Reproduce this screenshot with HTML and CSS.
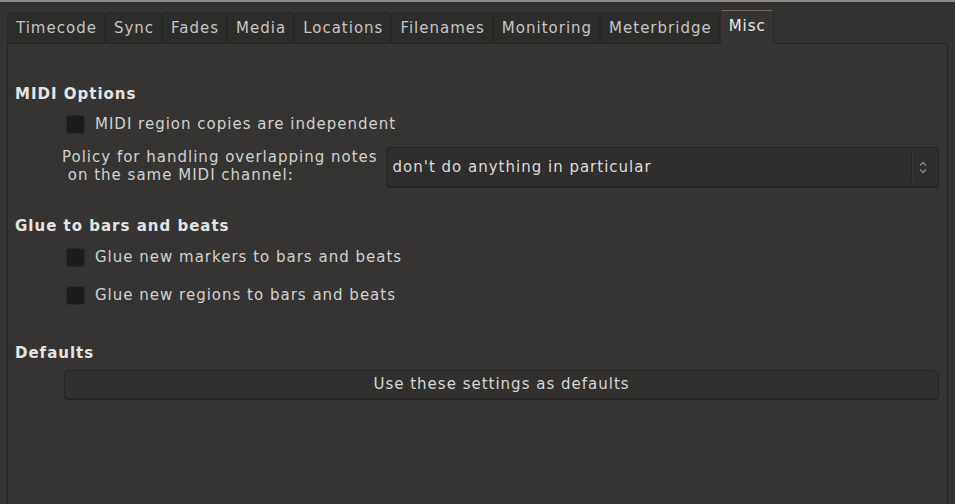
FILE: index.html
```html
<!DOCTYPE html>
<html>
<head>
<meta charset="utf-8">
<link rel="stylesheet" href="styles.css">
</head>
<body>
<div class="topline"></div>
<div class="tabs">
  <div class="tab">Timecode</div>
  <div class="tab">Sync</div>
  <div class="tab">Fades</div>
  <div class="tab">Media</div>
  <div class="tab">Locations</div>
  <div class="tab">Filenames</div>
  <div class="tab">Monitoring</div>
  <div class="tab">Meterbridge</div>
  <div class="tab active">Misc</div>
</div>
<div class="panel">
  <div class="heading h-midi">MIDI Options</div>
  <div class="check-row r1"><span class="box"></span><span class="label">MIDI region copies are independent</span></div>
  <div class="policy-row">
    <div class="policy-label">Policy for handling overlapping notes
 on the same MIDI channel:</div>
    <div class="combo">
      <span class="combo-text">don't do anything in particular</span>
      <span class="combo-sep"></span>
      <svg class="combo-arrow" width="8" height="13" viewBox="0 0 8 13"><path d="M1 4.5 L4 1.5 L7 4.5" fill="none" stroke="#8a8a89" stroke-width="1.3"/><path d="M1 8.5 L4 11.5 L7 8.5" fill="none" stroke="#8a8a89" stroke-width="1.3"/></svg>
    </div>
  </div>
  <div class="heading h-glue">Glue to bars and beats</div>
  <div class="check-row r2"><span class="box"></span><span class="label">Glue new markers to bars and beats</span></div>
  <div class="check-row r3"><span class="box"></span><span class="label">Glue new regions to bars and beats</span></div>
  <div class="heading h-def">Defaults</div>
  <div class="button">Use these settings as defaults</div>
</div>
</body>
</html>
```
FILE: styles.css
```css
html, body {
  margin: 0;
  padding: 0;
  height: 100%;
  overflow: hidden;
}
body {
  background: #333230;
  font-family: "DejaVu Sans", sans-serif;
  font-size: 15px;
  letter-spacing: 1px;
  color: #d2d2d0;
  display: flex;
  flex-direction: column;
}
.topline {
  height: 2px;
  background: #8d8d8c;
  flex: none;
}
.tabs {
  display: flex;
  align-items: flex-end;
  padding-left: 7px;
  margin-top: 8px;
  position: relative;
  z-index: 2;
  flex: none;
}
.tab {
  height: 30px;
  line-height: 30px;
  padding: 0 7px 0 8px;
  border: 1px solid #262625;
  border-bottom: none;
  border-radius: 4px 4px 0 0;
  background: #2c2c2b;
  color: #c6c6c4;
}
.tab.active {
  height: 33px;
  line-height: 30px;
  margin-bottom: -1px;
  background: #353432;
  border-color: #2a2928;
  border-top: 1px solid #6d675d;
  color: #ebebea;
}
.panel {
  flex: 1;
  min-height: 0;
  margin: 0 7px;
  border: 1px solid #252524;
  border-bottom: none;
  border-radius: 0 4px 0 0;
  background: #353432;
  padding: 40px 8px 0 7px;
  display: flex;
  flex-direction: column;
}
.heading {
  font-weight: bold;
  line-height: 20px;
  color: #e4e4e2;
}
.h-glue { margin-top: 29px; }
.h-def { margin-top: 38px; }
.check-row {
  display: flex;
  align-items: center;
  height: 20px;
  line-height: 20px;
  padding-left: 51px;
}
.r1 { margin-top: 10px; }
.r2 { margin-top: 11px; }
.r3 { margin-top: 18px; }
.box {
  width: 17px;
  height: 17px;
  background: #1c1c1c;
  border: 1px solid #2a2a29;
  border-radius: 3px;
  margin-right: 10px;
  flex: none;
}
.policy-row {
  display: flex;
  align-items: flex-start;
  margin-top: 13px;
  padding-left: 47px;
}
.policy-label {
  white-space: pre;
  line-height: 18px;
  margin-top: 1px;
  margin-right: 8px;
}
.combo {
  flex: 1;
  height: 38px;
  border: 1px solid #232322;
  border-radius: 4px;
  background: #2f2e2d;
  box-shadow: 0 1px 0 #252524;
  display: flex;
  align-items: center;
  padding-left: 6px;
}
.combo-text {
  flex: 1;
  color: #dcdcda;
}
.combo-sep {
  width: 1px;
  height: 30px;
  background: #242423;
  box-shadow: 1px 0 0 #393837;
  margin-right: 7px;
}
.combo-arrow {
  margin-right: 11px;
}
.button {
  margin-top: 7px;
  margin-left: 49px;
  height: 27px;
  line-height: 27px;
  border: 1px solid #262625;
  border-radius: 4px;
  background: #31302f;
  box-shadow: 0 1px 0 #242423;
  text-align: center;
  color: #d6d6d4;
}
```
